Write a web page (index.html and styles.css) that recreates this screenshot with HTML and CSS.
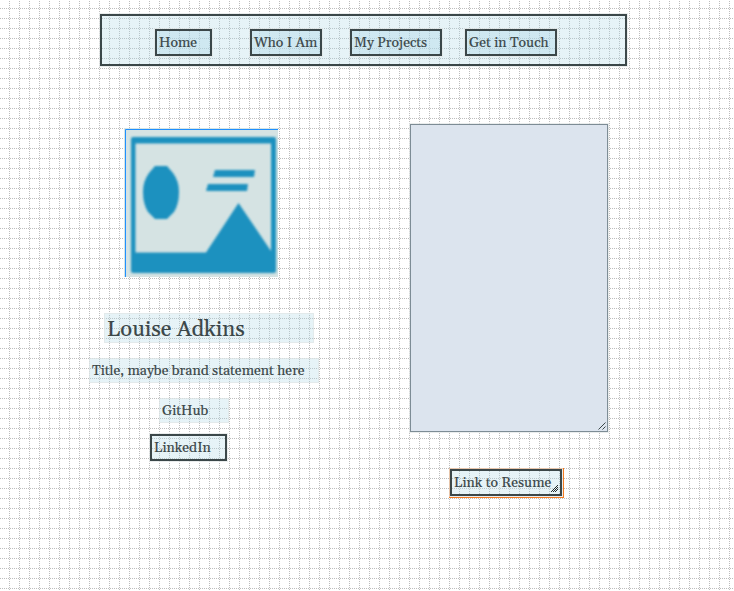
FILE: index.html
```html
<!DOCTYPE html>
<html lang="en">
<head>
<meta charset="utf-8">
<title>Louise Adkins</title>
<link rel="stylesheet" href="styles.css">
</head>
<body>
<svg class="grid" width="734" height="591" aria-hidden="true">
  <defs><pattern id="dots" width="10" height="10" patternUnits="userSpaceOnUse">
    <path fill="#bdbdbd" shape-rendering="crispEdges" d="M9 1h1v1h-1zM9 3h1v1h-1zM9 5h1v1h-1zM9 7h1v1h-1zM9 9h1v1h-1zM0 8h1v1h-1zM2 8h1v1h-1zM4 8h1v1h-1zM6 8h1v1h-1zM8 8h1v1h-1z"/>
  </pattern></defs>
  <rect width="734" height="591" fill="url(#dots)"/>
</svg>
<nav class="nav">
  <a class="box home"><span>Home</span></a>
  <a class="box who"><span>Who I Am</span></a>
  <a class="box projects"><span>My Projects</span></a>
  <a class="box touch"><span>Get in Touch</span></a>
</nav>
<main class="main">
  <section class="profile">
    <svg class="photo" width="154" height="149" viewBox="0 0 154 149">
      <defs><filter id="soft"><feGaussianBlur stdDeviation="0.8"/></filter></defs>
      <rect width="154" height="149" fill="#d5e3e3"/>
      <g fill="#1e91bf" filter="url(#soft)">
        <path fill-rule="evenodd" d="M9 9H150Q152 9 152 11V143Q152 145 150 145H9Q7 145 7 143V11Q7 9 9 9ZM11.500 15.500V124.500H82L114.500 75L147 123V15.500Z"/>
        <path d="M31 38H43L49 45Q55 53 55 64Q55 76 50 84L43 91H31L24 84Q19 76 19 64Q19 53 25 45Z"/>
        <path d="M91 42H131L130 49H89ZM84 56H124L123 63H82Z"/>
      </g>
      <path d="M1.500 149V1.500H154" fill="none" stroke="#1e90ff"/>
    </svg>
    <h1 class="tag name"><span>Louise Adkins</span></h1>
    <p class="tag title"><span>Title, maybe brand statement here</span></p>
    <a class="tag github"><span>GitHub</span></a>
    <a class="box linkedin"><span>LinkedIn</span></a>
  </section>
  <section class="aside">
    <div class="panel"><svg class="grip" width="8" height="8"><path d="M0.500 7.500L7.500 0.500M4.500 7.500L7.500 4.500" stroke="#3b4749" fill="none"/></svg></div>
    <div class="selection"><a class="box resume"><span>Link to Resume</span>
      <svg class="grip" width="8" height="8"><path fill="#202829" shape-rendering="crispEdges" d="M0 7h1v1h-1zM1 6h1v1h-1zM2 5h1v1h-1zM3 4h1v1h-1zM4 3h1v1h-1zM5 2h1v1h-1zM6 1h1v1h-1zM2 7h1v1h-1zM3 6h1v1h-1zM4 5h1v1h-1zM5 4h1v1h-1zM6 3h1v1h-1zM4 7h1v1h-1zM5 6h1v1h-1zM6 5h1v1h-1z"/></svg></a></div>
  </section>
</main>
</body>
</html>
```
FILE: styles.css
```css
* { box-sizing: border-box; }
body { margin: 0; height: 591px; overflow: hidden; background: #fff; color: #3b4749; font: 14px/22px Georgia, Gelasio, "Liberation Serif", serif; -webkit-text-stroke: .15px #3b4749; position: relative; }
.grid { position: absolute; inset: 0; z-index: -1; }
.nav { display: flex; align-items: flex-start; width: 527px; height: 52px; margin: 14px 0 0 100px; padding: 13px 0 0 53px; border: 2px solid #3b4749; background: rgba(173, 216, 230, .3); box-shadow: 0 0 0 1px rgba(225, 230, 230, .7); }
.box { display: block; height: 27px; padding: 1px 2px 0; border: 2px solid #3b4749; background: rgba(173, 216, 230, .3); box-shadow: 0 0 0 1px rgba(225, 230, 230, .7); white-space: nowrap; }
.nav .box { background: rgba(173, 216, 232, .4); }
.home { width: 57px; }
.who { width: 72px; margin-left: 38px; }
.projects { width: 92px; margin-left: 28px; }
.touch { width: 92px; margin-left: 23px; }
.main { display: flex; align-items: flex-start; }
.profile { display: flex; flex-direction: column; align-items: flex-start; width: 320px; margin-left: 90px; padding-top: 62px; }
.photo { display: block; margin-left: 34px; }
.tag { display: block; margin: 0; padding: 1px 2px 0; border: 1px solid rgba(225, 230, 230, .7); background: rgba(173, 216, 230, .3); font-weight: 400; white-space: nowrap; }
.name { width: 210px; height: 30px; margin: 36px 0 0 14px; font-size: 22px; line-height: 30px; }
.title { width: 230px; height: 25px; margin: 15px 0 0 -1px; }
.github { width: 70px; height: 25px; margin: 15px 0 0 69px; }
.linkedin { width: 77px; margin: 11px 0 0 60px; }
.aside { padding-top: 58px; }
.panel { position: relative; width: 198px; height: 308px; border: 1px solid #7d8c95; background: #dce4ee; box-shadow: 0 0 0 1px rgba(225, 230, 230, .7); }
.grip { position: absolute; right: 1px; bottom: 1px; }
.selection { width: 115px; height: 30px; margin: 36px 0 0 39px; border: 1px solid #f47b20; }
.resume { position: relative; width: 112px; }
.resume .grip { right: 1px; bottom: 2px; }
```
